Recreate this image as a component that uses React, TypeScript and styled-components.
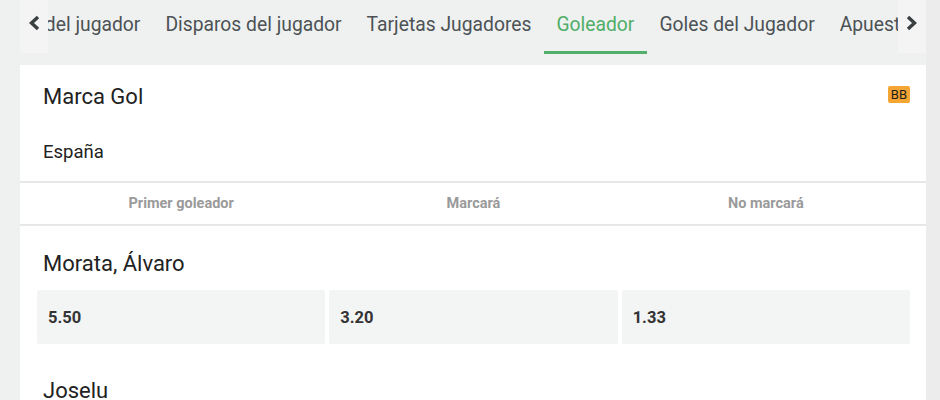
import React, { useLayoutEffect, useRef } from 'react'
import styled, { createGlobalStyle } from 'styled-components'

const GlobalStyle = createGlobalStyle`
    html, body {
        margin: 0;
        padding: 0;
        background: #eff1f0;
        font-family: Roboto, 'Liberation Sans', sans-serif;
        overflow: hidden;
    }
`

const tabs = [
    'Asistencias del jugador',
    'Disparos del jugador',
    'Tarjetas Jugadores',
    'Goleador',
    'Goles del Jugador',
    'Apuestas Jugador',
    'Especiales',
]

const columns = ['Primer goleador', 'Marcará', 'No marcará']

const players = [
    { name: 'Morata, Álvaro', odds: ['5.50', '3.20', '1.33'] },
    { name: 'Joselu', odds: ['6.50', '3.75', '1.25'] },
]

const App: React.FC = () => {
    const scroller = useRef<HTMLDivElement>(null)
    const active = useRef<HTMLDivElement>(null)

    useLayoutEffect(() => {
        if (scroller.current && active.current) {
            scroller.current.scrollLeft = active.current.offsetLeft - 524
        }
    }, [])

    return (
        <Page>
            <GlobalStyle />
            <TabBar>
                <TabScroller ref={scroller}>
                    {tabs.map((t) => (
                        <Tab key={t} ref={t === 'Goleador' ? active : undefined} $active={t === 'Goleador'}>
                            {t}
                        </Tab>
                    ))}
                </TabScroller>
                <Arrow $side="left">
                    <svg width="14" height="16" viewBox="0 0 14 16">
                        <path d="M11 2 L4.5 8 L11 14" fill="none" stroke="#3a3f42" strokeWidth="3.4" />
                    </svg>
                </Arrow>
                <Arrow $side="right">
                    <svg width="14" height="16" viewBox="0 0 14 16">
                        <path d="M3 2 L9.5 8 L3 14" fill="none" stroke="#3a3f42" strokeWidth="3.4" />
                    </svg>
                </Arrow>
            </TabBar>

            <Card>
                <CardHead>
                    <Title>Marca Gol</Title>
                    <Badge>BB</Badge>
                </CardHead>
                <Team>España</Team>
                <ColumnRow>
                    {columns.map((c) => (
                        <ColumnLabel key={c}>{c}</ColumnLabel>
                    ))}
                </ColumnRow>
                {players.map((p) => (
                    <Player key={p.name}>
                        <PlayerName>{p.name}</PlayerName>
                        <OddsRow>
                            {p.odds.map((o, i) => (
                                <Odd key={i}>{o}</Odd>
                            ))}
                        </OddsRow>
                    </Player>
                ))}
            </Card>
            <Track />
        </Page>
    )
}

export default App

const Page = styled.div`
    position: relative;
    width: 940px;
    height: 400px;
    padding: 0 14px 0 20px;
    box-sizing: border-box;
    overflow: hidden;
`

const Track = styled.div`
    position: absolute;
    top: 0;
    right: 0;
    width: 14px;
    height: 100%;
    background: #ebeceb;
`

const TabBar = styled.div`
    position: relative;
    height: 55px;
    margin-bottom: 10px;
`

const TabScroller = styled.div`
    display: flex;
    height: 100%;
    overflow: hidden;
    white-space: nowrap;
`

const Tab = styled.div<{ $active?: boolean }>`
    flex: none;
    padding: 0 12.5px 2px;
    height: 54px;
    box-sizing: border-box;
    display: flex;
    align-items: center;
    font-size: 19.3px;
    color: ${({ $active }) => ($active ? '#4fae69' : '#4c5255')};
    border-bottom: 3px solid ${({ $active }) => ($active ? '#53b06b' : 'transparent')};
`

const Arrow = styled.div<{ $side: 'left' | 'right' }>`
    position: absolute;
    top: 0;
    ${({ $side }) => ($side === 'left' ? 'left: 0;' : 'right: 0;')}
    width: 28px;
    height: 53px;
    background: #f3f4f3;
    display: flex;
    align-items: center;
    justify-content: center;
    padding-bottom: 8px;
    box-sizing: border-box;
`

const Card = styled.div`
    background: #fff;
`

const CardHead = styled.div`
    display: flex;
    align-items: flex-start;
    justify-content: space-between;
    padding: 19px 16px 0 23px;
    height: 60px;
    box-sizing: border-box;
`

const Title = styled.div`
    font-size: 22px;
    line-height: 26px;
    color: #222;
`

const Badge = styled.span`
    margin-top: 2px;
    background: #f4a533;
    border-radius: 2px;
    font-size: 13px;
    line-height: 17px;
    padding: 0 3px;
    color: #1d1d1d;
`

const Team = styled.div`
    padding: 15px 23px 0;
    height: 41px;
    font-size: 18.5px;
    line-height: 24px;
    color: #222;
    border-bottom: 2px solid #e6e8e8;
`

const ColumnRow = styled.div`
    display: grid;
    grid-template-columns: repeat(3, 1fr);
    gap: 4px;
    padding: 0 16px 0 17px;
    height: 41px;
    align-items: center;
    border-bottom: 2px solid #e6e8e8;
`

const ColumnLabel = styled.div`
    text-align: center;
    font-size: 14.5px;
    font-weight: 700;
    color: #9a9a9a;
`

const Player = styled.div`
    padding-top: 25px;
`

const PlayerName = styled.div`
    padding-left: 23px;
    font-size: 22px;
    line-height: 26px;
    color: #222;
    margin-bottom: 13px;
`

const OddsRow = styled.div`
    display: grid;
    grid-template-columns: repeat(3, 1fr);
    gap: 4px;
    padding: 0 16px 0 17px;
    margin-bottom: 9px;
`

const Odd = styled.div`
    height: 54px;
    display: flex;
    align-items: center;
    padding-left: 11px;
    background: #f3f4f4;
    border-radius: 2px;
    font-size: 16.5px;
    font-weight: 700;
    color: #333;
`
